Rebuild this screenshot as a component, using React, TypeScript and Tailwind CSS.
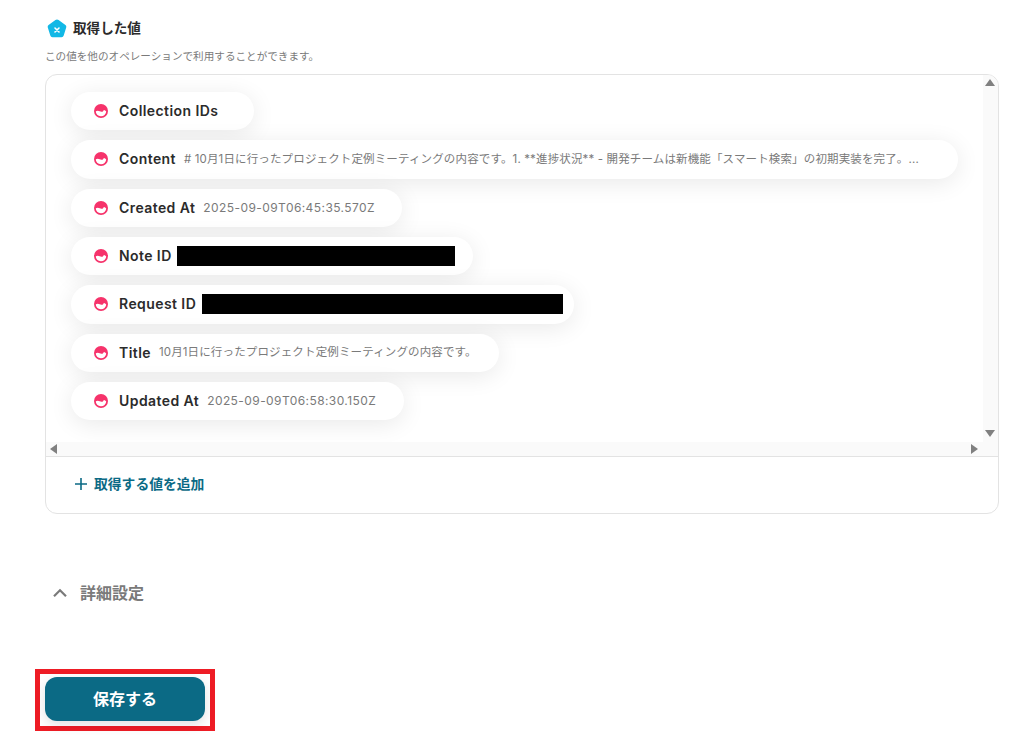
const font = '[font-family:Inter,"Noto_Sans_CJK_JP",sans-serif]';

const dateText = "text-[12px] tracking-[0.42px]";
const jpText = "text-[11.5px] tracking-[0.14px]";

const rows = [
  { label: "Collection IDs", pad: "pr-[36px]" },
  {
    label: "Content",
    value: "# 10月1日に行ったプロジェクト定例ミーティングの内容です。1. **進捗状況** - 開発チームは新機能「スマート検索」の初期実装を完了。...",
    valueClass: jpText,
    pad: "pr-[39px]",
  },
  { label: "Created At", value: "2025-09-09T06:45:35.570Z", valueClass: dateText, pad: "pr-[27px]" },
  { label: "Note ID", redact: "ml-[5px] w-[278px]", pad: "pr-[18px]" },
  { label: "Request ID", redact: "ml-[6px] w-[361px]", pad: "pr-[11px]" },
  {
    label: "Title",
    value: "10月1日に行ったプロジェクト定例ミーティングの内容です。",
    valueClass: jpText,
    pad: "pr-[22px]",
  },
  { label: "Updated At", value: "2025-09-09T06:58:30.150Z", valueClass: dateText, pad: "pr-[28px]" },
];

const MoonIcon = () => (
  <svg width="14" height="14" viewBox="0 0 14 14" className="shrink-0">
    <circle cx="7" cy="7" r="7" fill="#f6336b" />
    <path
      d="M1.800 7.200C4 5.800 6 7.400 7.400 7.800C8.600 8.100 9.400 7.200 9.800 6C11 6.400 12.200 7 12.200 7.600A5.200 4.800 0 0 1 1.800 7.200Z"
      fill="#fff"
    />
  </svg>
);

const Arrow = ({ dir }: { dir: "up" | "down" | "left" | "right" }) => {
  const points = {
    up: "5,1 10,8 0,8",
    down: "0,1 10,1 5,8",
    left: "8,0 8,10 1,5",
    right: "1,0 1,10 8,5",
  }[dir];
  return (
    <svg width="10" height="10" viewBox="0 0 10 10" className="shrink-0">
      <polygon points={points} fill="#808080" />
    </svg>
  );
};

type ChipProps = { label: string; value?: string; valueClass?: string; redact?: string; pad: string };

const Chip = ({ label, value, valueClass, redact, pad }: ChipProps) => (
  <div
    className={`flex h-[38.33px] w-fit items-center rounded-full bg-white pl-[23px] shadow-[0_4px_24px_rgba(0,0,0,0.09)] ${pad}`}
  >
    <MoonIcon />
    <span className="ml-[11px] whitespace-nowrap pb-px text-[14px] font-semibold tracking-[0.42px] text-[#2b2b2b]">
      {label}
    </span>
    {value ? <span className={`ml-2 whitespace-nowrap text-[#7a7a7a] ${valueClass}`}>{value}</span> : null}
    {redact ? <span className={`h-5 bg-black ${redact}`} /> : null}
  </div>
);

export default function App() {
  return (
    <div className={`h-[753px] w-[1036px] overflow-hidden bg-white px-[45px] pt-[18px] ${font}`}>
      <div className="flex h-[21px] items-center pl-[2px]">
        <svg width="20" height="20" viewBox="0 0 20 20" className="shrink-0">
          <path
            d="M8.400 1 1.600 6a2.200 2.200 0 0 0-.8 2.400l2.500 8.200A2.200 2.200 0 0 0 5.400 18.200h9.200a2.200 2.200 0 0 0 2.100-1.600l2.500-8.200a2.200 2.200 0 0 0-.8-2.400L11.600 1a2.700 2.700 0 0 0-3.200 0z"
            fill="#12b8e6"
          />
          <path d="M8 9 12 13M12 9 8 13" stroke="#fff" strokeWidth="1.600" strokeLinecap="round" />
        </svg>
        <h2 className="ml-[6px] text-[13.6px] font-semibold text-[#2b2b2b]">取得した値</h2>
      </div>
      <p className="mt-[10px] text-[10.6px] leading-[16px] text-[#7a7a7a]">
        この値を他のオペレーションで利用することができます。
      </p>

      <div className="mt-[9px] h-[440px] w-[954px] overflow-hidden rounded-[12px] border border-[#e3e3e3]">
        <div className="flex h-[382px] border-b border-[#e3e3e3]">
          <div className="flex min-w-0 flex-1 flex-col">
            <div className="flex h-[367px] flex-col gap-[10px] pl-[25px] pt-[17px]">
              {rows.map((row) => (
                <Chip key={row.label} {...row} />
              ))}
            </div>
            <div className="flex h-[14px] items-center justify-between bg-[#fafafa] px-[3px]">
              <Arrow dir="left" />
              <Arrow dir="right" />
            </div>
          </div>
          <div className="flex w-[15px] flex-col items-center justify-between bg-[#fafafa] pb-[17px] pr-[2px] pt-[3px]">
            <Arrow dir="up" />
            <Arrow dir="down" />
          </div>
        </div>
        <button className="ml-[28px] mt-[17px] flex items-center text-[13.8px] font-semibold text-[#0b6a85]">
          <svg width="14" height="14" viewBox="0 0 14 14" className="mr-[6px]">
            <path d="M7 1v12M1 7h12" stroke="#0b6a85" strokeWidth="1.600" />
          </svg>
          取得する値を追加
        </button>
      </div>

      <div className="ml-[7px] mt-[67px] flex items-center">
        <svg width="16" height="10" viewBox="0 0 16 10">
          <path d="M2 8.300 8 2.300l6 6" fill="none" stroke="#7a7a7a" strokeWidth="2.200" />
        </svg>
        <span className="ml-[12px] text-[16px] font-semibold text-[#7a7a7a]">詳細設定</span>
      </div>

      <div className="-ml-[10px] mt-[64px] w-fit border-[5px] border-[#ee1c25] px-[5px] pb-[5px] pt-[3px]">
        <button className="h-[44px] w-[160px] rounded-[12px] bg-[#0b6a85] text-[16px] font-bold text-white shadow-[0_4px_12px_rgba(0,0,0,0.12)]">
          保存する
        </button>
      </div>
    </div>
  );
}
